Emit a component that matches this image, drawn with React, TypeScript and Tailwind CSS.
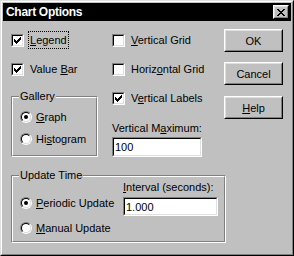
import React from 'react';

// Win95-style "Chart Options" dialog

function Mn({ text, at }: { text: string; at: number }) {
  if (at < 0) return <span>{text}</span>;
  return (
    <span className="whitespace-pre">
      {text.slice(0, at)}
      <u className="underline decoration-1 underline-offset-[1px]">{text[at]}</u>
      {text.slice(at + 1)}
    </span>
  );
}

function CheckBox({ checked }: { checked?: boolean }) {
  return (
    <span className="flex h-[13px] w-[13px] shrink-0 border border-t-[#808080] border-l-[#808080] border-r-white border-b-white">
      <span className="flex flex-1 items-center justify-center border border-t-black border-l-black border-r-[#dfdfdf] border-b-[#dfdfdf] bg-white">
        {checked && (
          <svg width="7" height="7" viewBox="0 0 7 7" shapeRendering="crispEdges">
            <path d="M6 0h1v3h-1zM5 1h1v3h-1zM4 2h1v3h-1zM3 3h1v3h-1zM2 4h1v3h-1zM1 3h1v3h-1zM0 2h1v3h-1z" fill="black" />
          </svg>
        )}
      </span>
    </span>
  );
}

function Radio({ checked }: { checked?: boolean }) {
  return (
    <span className="flex h-[12px] w-[12px] shrink-0 rounded-full border border-t-[#808080] border-l-[#808080] border-r-white border-b-white">
      <span className="flex flex-1 items-center justify-center rounded-full border border-t-black border-l-black border-r-[#dfdfdf] border-b-[#dfdfdf] bg-white">
        {checked && <span className="h-[4px] w-[4px] rounded-full bg-black" />}
      </span>
    </span>
  );
}

function CheckRow({ label, at, checked, focus }: { label: string; at: number; checked?: boolean; focus?: boolean }) {
  return (
    <div className="flex h-[18px] items-center">
      <CheckBox checked={checked} />
      <span
        className={
          'ml-[4px] flex h-[18px] items-center border px-[1px] ' +
          (focus ? 'border-dotted border-black' : 'border-transparent')
        }
      >
        <Mn text={label} at={at} />
      </span>
    </div>
  );
}

function RadioRow({ label, at, checked }: { label: string; at: number; checked?: boolean }) {
  return (
    <div className="flex h-[16px] items-center gap-[4px]">
      <Radio checked={checked} />
      <Mn text={label} at={at} />
    </div>
  );
}

function Button({ children, className = '' }: { children: React.ReactNode; className?: string }) {
  return (
    <div className={'flex h-[23px] w-[59px] border border-t-white border-l-white border-r-black border-b-black ' + className}>
      <div className="flex flex-1 items-center justify-center border border-t-[#dfdfdf] border-l-[#dfdfdf] border-r-[#808080] border-b-[#808080]">
        {children}
      </div>
    </div>
  );
}

function TextBox({ value, className = '' }: { value: string; className?: string }) {
  return (
    <div className={'flex border border-t-[#808080] border-l-[#808080] border-r-white border-b-white ' + className}>
      <div className="flex flex-1 items-center border border-t-black border-l-black border-r-[#dfdfdf] border-b-[#dfdfdf] bg-white pl-[1px]">
        {value}
      </div>
    </div>
  );
}

function GroupBox({ title, className = '', children }: { title: string; className?: string; children: React.ReactNode }) {
  return (
    <div className={'relative flex border border-t-[#808080] border-l-[#808080] border-r-white border-b-white ' + className}>
      <div className="flex flex-1 border border-t-white border-l-white border-r-[#808080] border-b-[#808080]">{children}</div>
      <span className="absolute left-[7px] top-[-8px] bg-[#c0c0c0] px-[1px] leading-[14px]">{title}</span>
    </div>
  );
}

export default function App() {
  return (
    <div className="h-[256px] w-[294px] bg-[#c0c0c0] font-['Liberation_Sans',Arial,sans-serif] text-[11px] leading-[14px] text-black">
      <div className="flex h-full flex-col border border-t-[#dfdfdf] border-l-[#dfdfdf] border-r-black border-b-black">
        <div className="flex flex-1 flex-col border border-t-white border-l-white border-r-[#808080] border-b-[#808080] p-[1px]">
          {/* title bar */}
          <div className="flex h-[18px] items-center justify-between bg-black pl-[3px] pr-[2px]">
            <span className="text-[12px] font-bold tracking-[-0.3px] text-white">Chart Options</span>
            <div className="flex h-[14px] w-[16px] border border-t-white border-l-white border-r-black border-b-black">
              <div className="flex flex-1 items-center justify-center border border-t-[#dfdfdf] border-l-[#dfdfdf] border-r-[#808080] border-b-[#808080] bg-[#c0c0c0]">
                <svg width="8" height="7" viewBox="0 0 8 7" shapeRendering="crispEdges">
                  <path
                    d="M0 0h2v1h-2zM6 0h2v1h-2zM1 1h2v1h-2zM5 1h2v1h-2zM2 2h4v1h-4zM3 3h2v1h-2zM2 4h4v1h-4zM1 5h2v1h-2zM5 5h2v1h-2zM0 6h2v1h-2zM6 6h2v1h-2z"
                    fill="black"
                  />
                </svg>
              </div>
            </div>
          </div>

          {/* client area */}
          <div className="flex flex-col pl-[8px] pt-[8px]">
            <div className="flex items-start">
              <div className="mt-[2px] flex w-[86px] flex-col">
                <CheckRow label="Legend" at={0} checked focus />
                <div className="mt-[11px]">
                  <CheckRow label="Value Bar" at={6} checked />
                </div>
                <GroupBox title="Gallery" className="mt-[18px] h-[61px] w-[87px]">
                  <div className="flex flex-col gap-[6px] pl-[7px] pt-[11px]">
                    <RadioRow label="Graph" at={0} checked />
                    <RadioRow label="Histogram" at={2} />
                  </div>
                </GroupBox>
              </div>

              <div className="ml-[15px] mt-[2px] flex w-[112px] flex-col">
                <CheckRow label="Vertical Grid" at={0} />
                <div className="mt-[11px]">
                  <CheckRow label="Horizontal Grid" at={5} />
                </div>
                <div className="mt-[11px]">
                  <CheckRow label="Vertical Labels" at={1} checked />
                </div>
                <div className="mt-[14px]">
                  <Mn text="Vertical Maximum:" at={10} />
                </div>
                <TextBox value="100" className="mt-[2px] h-[20px] w-[90px]" />
              </div>

              <div className="flex flex-col">
                <Button>OK</Button>
                <Button className="mt-[10px]">Cancel</Button>
                <Button className="mt-[11px]">
                  <Mn text="Help" at={0} />
                </Button>
              </div>
            </div>

            <GroupBox title="Update Time" className="mt-[18px] h-[68px] w-[215px]">
              <div className="flex">
                <div className="flex w-[110px] flex-col gap-[9px] pl-[7px] pt-[18px]">
                  <RadioRow label="Periodic Update" at={0} checked />
                  <RadioRow label="Manual Update" at={0} />
                </div>
                <div className="flex flex-col pt-[3px]">
                  <Mn text="Interval (seconds):" at={0} />
                  <TextBox value="1.000" className="mt-[3px] h-[19px] w-[95px]" />
                </div>
              </div>
            </GroupBox>
          </div>
        </div>
      </div>
    </div>
  );
}
